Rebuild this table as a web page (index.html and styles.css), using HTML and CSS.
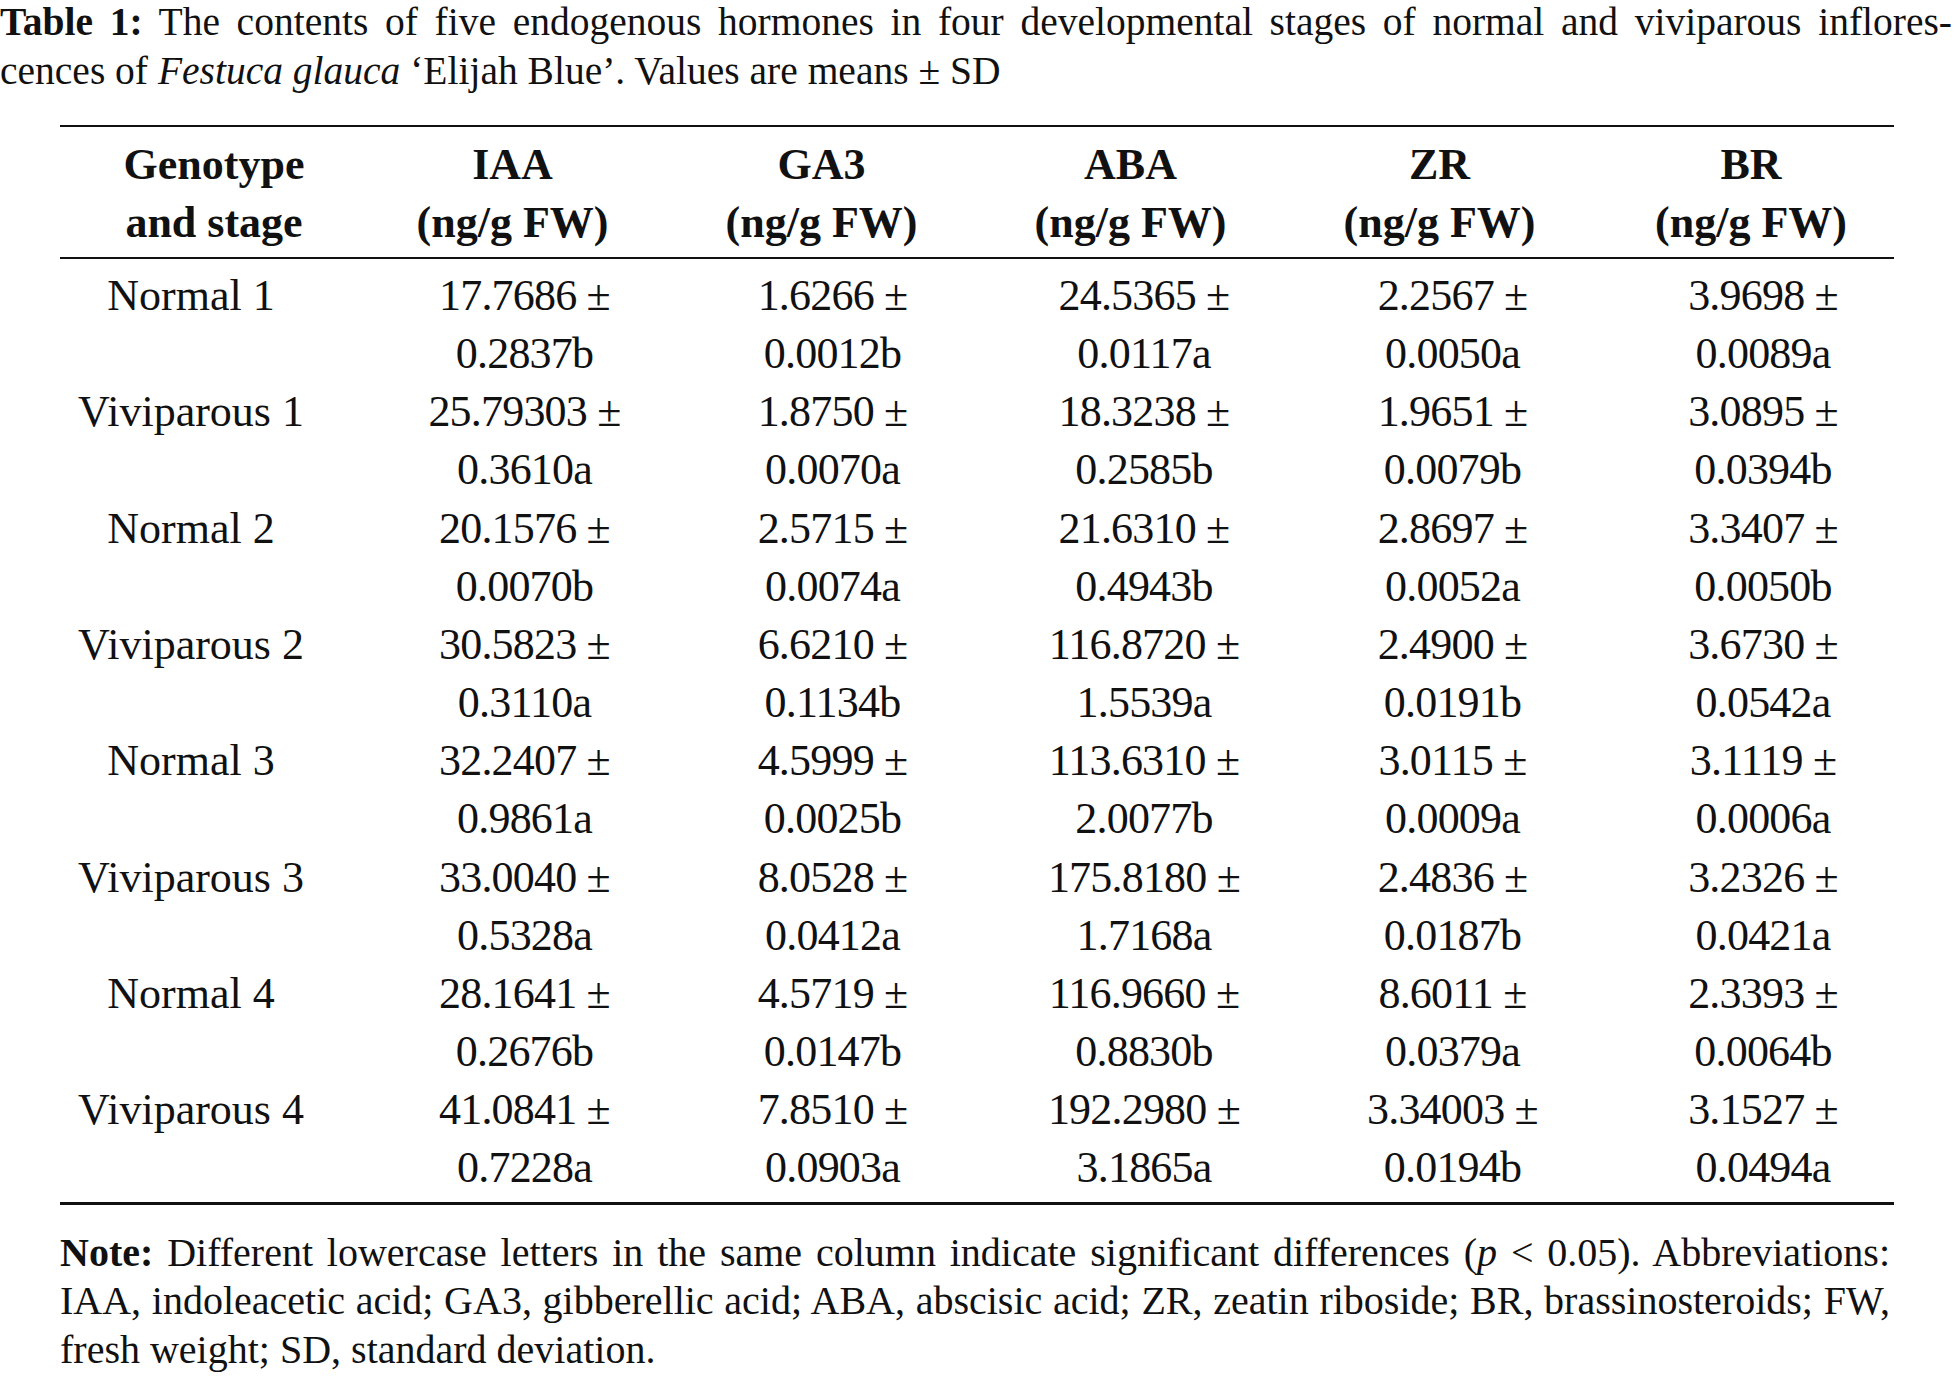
FILE: index.html
```html
<!DOCTYPE html>
<html lang="en">
<head>
<meta charset="utf-8">
<title>Table 1</title>
<link rel="stylesheet" href="styles.css">
</head>
<body>
<div class="page">
  <div class="caption">
    <span class="jline"><b>Table 1:</b> The contents of five endogenous hormones in four developmental stages of normal and viviparous inflores-</span>
    <span class="lline">cences of <i>Festuca glauca</i> ‘Elijah Blue’. Values are means ± SD</span>
  </div>

  <table class="data">
    <colgroup>
      <col class="c1"><col class="cn"><col class="cn"><col class="cn"><col class="cn"><col class="c6">
    </colgroup>
    <thead>
      <tr>
        <th class="h1">Genotype<br>and stage</th>
        <th class="h2">IAA<br>(ng/g FW)</th>
        <th class="h3">GA3<br>(ng/g FW)</th>
        <th class="h3">ABA<br>(ng/g FW)</th>
        <th class="h3">ZR<br>(ng/g FW)</th>
        <th class="h6">BR<br>(ng/g FW)</th>
      </tr>
    </thead>
    <tbody>
      <tr>
        <td class="d1">Normal 1</td>
        <td class="d2">17.7686 ±<br>0.2837b</td>
        <td class="d3">1.6266 ±<br>0.0012b</td>
        <td class="d4">24.5365 ±<br>0.0117a</td>
        <td class="d5">2.2567 ±<br>0.0050a</td>
        <td class="d6">3.9698 ±<br>0.0089a</td>
      </tr>
      <tr>
        <td class="d1">Viviparous 1</td>
        <td class="d2">25.79303 ±<br>0.3610a</td>
        <td class="d3">1.8750 ±<br>0.0070a</td>
        <td class="d4">18.3238 ±<br>0.2585b</td>
        <td class="d5">1.9651 ±<br>0.0079b</td>
        <td class="d6">3.0895 ±<br>0.0394b</td>
      </tr>
      <tr>
        <td class="d1">Normal 2</td>
        <td class="d2">20.1576 ±<br>0.0070b</td>
        <td class="d3">2.5715 ±<br>0.0074a</td>
        <td class="d4">21.6310 ±<br>0.4943b</td>
        <td class="d5">2.8697 ±<br>0.0052a</td>
        <td class="d6">3.3407 ±<br>0.0050b</td>
      </tr>
      <tr>
        <td class="d1">Viviparous 2</td>
        <td class="d2">30.5823 ±<br>0.3110a</td>
        <td class="d3">6.6210 ±<br>0.1134b</td>
        <td class="d4">116.8720 ±<br>1.5539a</td>
        <td class="d5">2.4900 ±<br>0.0191b</td>
        <td class="d6">3.6730 ±<br>0.0542a</td>
      </tr>
      <tr>
        <td class="d1">Normal 3</td>
        <td class="d2">32.2407 ±<br>0.9861a</td>
        <td class="d3">4.5999 ±<br>0.0025b</td>
        <td class="d4">113.6310 ±<br>2.0077b</td>
        <td class="d5">3.0115 ±<br>0.0009a</td>
        <td class="d6">3.1119 ±<br>0.0006a</td>
      </tr>
      <tr>
        <td class="d1">Viviparous 3</td>
        <td class="d2">33.0040 ±<br>0.5328a</td>
        <td class="d3">8.0528 ±<br>0.0412a</td>
        <td class="d4">175.8180 ±<br>1.7168a</td>
        <td class="d5">2.4836 ±<br>0.0187b</td>
        <td class="d6">3.2326 ±<br>0.0421a</td>
      </tr>
      <tr>
        <td class="d1">Normal 4</td>
        <td class="d2">28.1641 ±<br>0.2676b</td>
        <td class="d3">4.5719 ±<br>0.0147b</td>
        <td class="d4">116.9660 ±<br>0.8830b</td>
        <td class="d5">8.6011 ±<br>0.0379a</td>
        <td class="d6">2.3393 ±<br>0.0064b</td>
      </tr>
      <tr>
        <td class="d1">Viviparous 4</td>
        <td class="d2">41.0841 ±<br>0.7228a</td>
        <td class="d3">7.8510 ±<br>0.0903a</td>
        <td class="d4">192.2980 ±<br>3.1865a</td>
        <td class="d5">3.34003 ±<br>0.0194b</td>
        <td class="d6">3.1527 ±<br>0.0494a</td>
      </tr>
    </tbody>
  </table>

  <div class="note">
    <span class="jline"><b>Note:</b> Different lowercase letters in the same column indicate significant differences (<i>p</i> &lt; 0.05). Abbreviations:</span>
    <span class="jline">IAA, indoleacetic acid; GA3, gibberellic acid; ABA, abscisic acid; ZR, zeatin riboside; BR, brassinosteroids; FW,</span>
    <span class="lline">fresh weight; SD, standard deviation.</span>
  </div>
</div>
</body>
</html>
```

FILE: styles.css
```css
html, body {
  margin: 0;
  padding: 0;
  background: #ffffff;
}

body {
  font-family: "Liberation Serif", "Times New Roman", serif;
  color: #111111;
}

.page {
  width: 1954px;
}

.jline {
  display: block;
  text-align: justify;
  text-align-last: justify;
}

.lline {
  display: block;
  text-align: left;
  white-space: nowrap;
}

.caption {
  font-size: 39.5px;
  line-height: 49px;
  width: 1952px;
  margin: -2px 0 0 0;
}

.data {
  margin: 29px 0 0 60px;
  width: 1834px;
  border-collapse: collapse;
  table-layout: fixed;
  font-size: 44px;
  line-height: 58px;
  border-top: 2px solid #111111;
  border-bottom: 3px solid #111111;
}

.c1 { width: 298px; }
.cn { width: 309px; }
.c6 { width: 300px; }

.data thead tr {
  border-bottom: 2px solid #111111;
}

.data th {
  font-weight: bold;
  text-align: center;
  vertical-align: top;
  padding: 9px 0 5px 0;
}

.data th.h1 { padding-left: 10px; }
.data th.h6 { padding-left: 14px; }

.data td {
  text-align: center;
  vertical-align: top;
  padding: 0;
  line-height: 58.15px;
  white-space: nowrap;
  letter-spacing: -0.8px;
}

.data td.d1 {
  padding-right: 36px;
  letter-spacing: 0;
}

.data tbody tr:first-child td { padding-top: 8px; }
.data tbody tr:last-child td { padding-bottom: 4px; }

.data td.d2 { padding-left: 24px; }
.data td.d3 { padding-left: 22px; }
.data td.d4 { padding-left: 27px; }
.data td.d5 { padding-left: 26px; }
.data td.d6 { padding-left: 38px; }

.note {
  font-size: 40px;
  line-height: 48.5px;
  margin: 24px 0 0 60px;
  width: 1830px;
}
```
